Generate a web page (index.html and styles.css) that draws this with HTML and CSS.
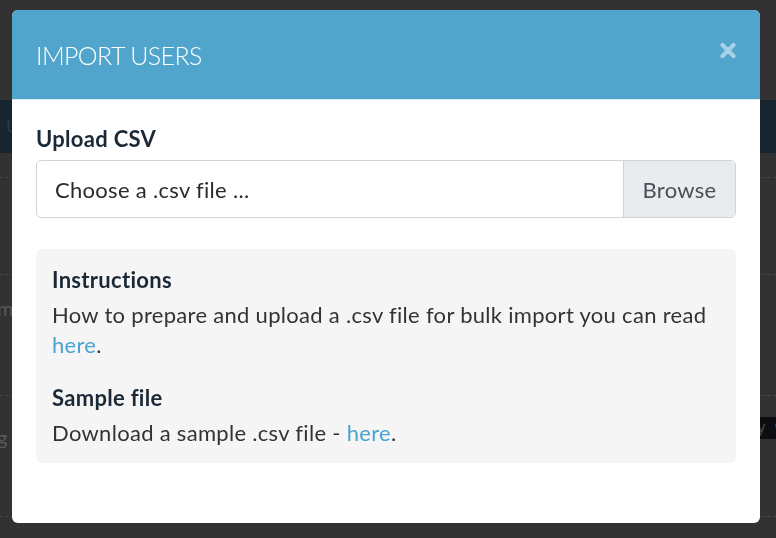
FILE: index.html
```html
<!DOCTYPE html>
<html lang="en">
<head>
    <meta charset="UTF-8">
    <meta name="viewport" content="width=device-width, initial-scale=1.0">
    <title>Import users</title>
    <link rel="stylesheet" href="styles.css">
</head>
<body>

    <!-- page behind the modal -->
    <div class="page">
        <div class="page-top"></div>
        <div class="page-nav"><span>U</span></div>
        <div class="page-gap"></div>
        <div class="page-row short"></div>
        <div class="page-row"><span class="cut">m</span></div>
        <div class="page-row"><span class="cut low">g</span><span class="code">by way</span></div>
        <div class="page-row"></div>
    </div>

    <div class="overlay">
        <div class="modal">
            <div class="modal-header">
                <h3>IMPORT USERS</h3>
                <button class="close" aria-label="Close">
                    <svg width="16" height="17" viewBox="0 0 16 17">
                        <path d="M2.5 3 L13.5 14 M13.5 3 L2.5 14" stroke="#a6d1e6" stroke-width="4.2" stroke-linecap="round"/>
                    </svg>
                </button>
            </div>
            <div class="modal-body">
                <label class="field-label">Upload CSV</label>
                <div class="file-input">
                    <span class="file-name">Choose a .csv file ...</span>
                    <span class="browse">Browse</span>
                </div>

                <div class="info-box">
                    <h4>Instructions</h4>
                    <p>How to prepare and upload a .csv file for bulk import you can read <a href="#">here</a>.</p>
                    <h4>Sample file</h4>
                    <p class="last">Download a sample .csv file - <a href="#">here</a>.</p>
                </div>
            </div>
        </div>
    </div>

</body>
</html>
```

FILE: styles.css
```css
html, body {
    margin: 0;
    height: 100%;
    overflow: hidden;
}
body {
    font-family: Lato, "Open Sans", sans-serif;
    background-color: #323232;
    color: #333;
}

/* background page */
.page-top {
    height: 100px;
}
.page-nav {
    height: 53px;
    background: #172531;
    color: #2c3a46;
    font-size: 18px;
    line-height: 53px;
    padding-left: 6px;
}
.page-gap {
    height: 24px;
}
.page-row {
    height: 120px;
    border-top: 1px dashed #464646;
    display: flex;
    justify-content: space-between;
    align-items: center;
    color: #5a5a5a;
    font-size: 20px;
}
.page-row.short {
    height: 96px;
}
.cut {
    margin-left: -3px;
    margin-top: -54px;
}
.cut.low {
    margin-top: -38px;
}
.code {
    background: #0b0d10;
    color: #4a4a4a;
    font-family: "DejaVu Sans Mono", monospace;
    font-size: 15px;
    padding: 2px 6px;
    margin-right: -32px;
    margin-top: -56px;
}

/* modal */
.overlay {
    position: fixed;
    top: 0;
    left: 0;
    right: 0;
    bottom: 0;
    padding: 10px 16px 0 12px;
}
.modal {
    width: 748px;
    background: white;
    border-radius: 6px;
    overflow: hidden;
}
.modal-header {
    height: 90px;
    background: #51a5cc;
    border-bottom: 1px solid #dde8ee;
    display: flex;
    justify-content: space-between;
    align-items: center;
    padding: 0 24px;
    box-sizing: border-box;
}
.modal-header h3 {
    margin: 0;
    color: white;
    font-weight: 300;
    font-size: 25px;
    letter-spacing: -0.6px;
}
.close {
    background: none;
    border: none;
    padding: 0;
    margin-top: -9px;
    cursor: pointer;
    display: flex;
}
.modal-body {
    padding: 24px 24px 60px;
    letter-spacing: 0.3px;
}
.field-label {
    display: block;
    font-weight: bold;
    font-size: 22px;
    line-height: 30px;
    color: #1b2836;
    margin-bottom: 6px;
}
.file-input {
    display: flex;
    height: 56px;
    border: 1px solid #ced4da;
    border-radius: 5px;
    overflow: hidden;
    font-size: 22px;
}
.file-name {
    flex: 1;
    display: flex;
    align-items: center;
    padding: 0 18px;
    color: #2b2b2b;
}
.browse {
    width: 111px;
    display: flex;
    align-items: center;
    justify-content: center;
    background: #e9ecef;
    border-left: 1px solid #ced4da;
    color: #495057;
}
.info-box {
    margin-top: 31px;
    background: #f5f5f5;
    border-radius: 6px;
    padding: 16px 16px 15px;
    font-size: 22px;
    line-height: 30px;
}
.info-box h4 {
    margin: 0 0 5px;
    font-size: 22px;
    color: #1b2836;
}
.info-box p {
    margin: 0 0 23px;
}
.info-box p.last {
    margin: 0;
}
.info-box a {
    color: #4aa3d0;
    text-decoration: none;
}
```
